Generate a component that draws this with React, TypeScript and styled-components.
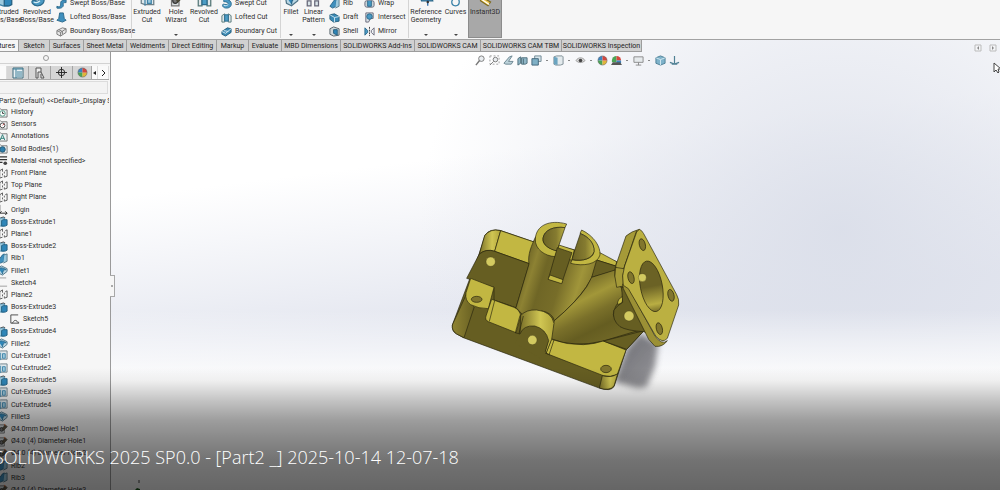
import React from "react";
import styled, { createGlobalStyle } from "styled-components";

const GlobalStyle = createGlobalStyle`
  * { box-sizing: border-box; }
  body { margin: 0; font-family: Roboto, "Open Sans", "Noto Sans", sans-serif; font-size: 7px; color: #2e2e2e; }
  button { font: inherit; color: inherit; background: none; border: 0; padding: 0; margin: 0; }
  ul { list-style: none; margin: 0; padding: 0; }
  svg { flex: none; }
`;

const Page = styled.div`
  position: relative;
  display: flex;
  flex-direction: column;
  height: 100vh;
  overflow: hidden;
`;

const Ribbon = styled.header`
  display: flex;
  align-items: flex-end;
  flex: none;
  height: 40px;
  padding-bottom: 1px;
  overflow: hidden;
  background: #f6f6f6;
  border-bottom: 1px solid #a2a2a2;
`;

const RibbonGroup = styled.div<{ $first?: boolean }>`
  display: flex;
  flex: none;
  margin-left: ${(p) => (p.$first ? "-12px" : "0")};
  border-left: 1px solid ${(p) => (p.$first ? "transparent" : "#d4d4d4")};
`;

const BigButton = styled.button<{ $w: number; $on?: boolean }>`
  display: flex;
  flex-direction: column;
  align-items: center;
  width: ${(p) => p.$w}px;
  height: 48px;
  padding-top: 2px;
  line-height: 8px;
  text-align: center;
  background: ${(p) => (p.$on ? "#a8a8a8" : "transparent")};
  border: solid ${(p) => (p.$on ? "#8c8c8c" : "transparent")};
  border-width: 0 1px 1px;
`;

const BigLabel = styled.span`
  display: block;
  height: 24px;
  padding-top: 1px;
  white-space: pre;
`;

const Caret = styled.i`
  width: 0;
  height: 0;
  margin-top: 3px;
  border: 2px solid transparent;
  border-top-color: #444;
  border-bottom: 0;
`;

const Stack = styled.div<{ $w: number }>`
  display: flex;
  flex-direction: column;
  justify-content: flex-end;
  width: ${(p) => p.$w}px;
  padding-left: 3px;
`;

const SmallButton = styled.button`
  display: flex;
  align-items: center;
  gap: 3px;
  height: 14px;
  white-space: nowrap;
`;

const Workspace = styled.div`
  display: flex;
  flex-direction: column;
  flex: 1;
  min-height: 0;
  background:
    linear-gradient(180deg, transparent 60%, rgba(255, 255, 255, 0.5) 68%, #fdfdfd 76%),
    radial-gradient(ellipse 42% 85% at 84% 42%, rgba(218, 222, 233, 0.9), rgba(226, 229, 238, 0.6) 50%, transparent),
    linear-gradient(173deg, #fff 30%, #e1e4ee 62%);
`;

const TabBar = styled.nav`
  display: flex;
  flex: none;
  height: 12px;
`;

const Tab = styled.button<{ $w: number; $on?: boolean }>`
  display: flex;
  justify-content: ${(p) => (p.$on ? "flex-end" : "center")};
  align-items: center;
  flex: none;
  width: ${(p) => p.$w}px;
  padding: 0 3px;
  color: #222;
  white-space: nowrap;
  overflow: hidden;
  background: ${(p) => (p.$on ? "#f6f6f6" : "#d1d1d1")};
  border: solid #9d9d9d;
  border-width: 0 1px 1px 0;
`;

const Body = styled.div`
  display: grid;
  grid-template-columns: 111px 1fr;
  flex: 1;
  min-height: 0;
`;

const Panel = styled.aside`
  display: flex;
  flex-direction: column;
  min-height: 0;
  background: #f6f6f6;
  border-right: 1px solid #9a9a9a;
`;

const Grip = styled.div`
  display: flex;
  justify-content: center;
  align-items: center;
  height: 12px;
  padding-right: 18px;
  border-bottom: 1px solid #d2d2d2;

  &::after {
    content: "";
    width: 4px;
    height: 4px;
    border: 1px solid #999;
    border-radius: 50%;
  }
`;

const PanelTabs = styled.div`
  display: flex;
  height: 14px;
  margin: 2px 1px 0 0;
  border-bottom: 1px solid #aaa;
`;

const PanelTab = styled.button<{ $w: number; $plain?: boolean }>`
  display: flex;
  justify-content: center;
  align-items: center;
  width: ${(p) => p.$w}px;
  overflow: hidden;
  background: ${(p) => (p.$plain ? "#fafafa" : "#d6d6d6")};
  border-right: 1px solid ${(p) => (p.$plain ? "#ddd" : "#a5a5a5")};
`;

const Filter = styled.input`
  width: 108px;
  height: 13px;
  margin-top: 1px;
  padding: 0;
  background: #f3f3f3;
  border: 1px solid #dcdcdc;
  border-left: 0;
`;

const TreeRoot = styled.div`
  height: 12px;
  margin: 1px 1px 0 -1px;
  line-height: 12px;
  white-space: nowrap;
  overflow: hidden;
`;

const Tree = styled.ul`
  display: grid;
  grid-auto-rows: minmax(12px, 1fr);
  flex: 1;
  margin-top: -1px;
  margin-bottom: -6px;
`;

const TreeItem = styled.li<{ $child?: boolean }>`
  display: flex;
  align-items: center;
  gap: 3px;
  padding-left: ${(p) => (p.$child ? "12px" : "0")};
  margin-left: -3px;
  white-space: nowrap;
`;

const Canvas = styled.main`
  position: relative;
  min-width: 0;
`;

const ViewBar = styled.div`
  display: flex;
  align-items: center;
  height: 16px;
  padding-left: 362px;
`;

const ViewButton = styled.button`
  display: flex;
  justify-content: center;
  width: 14px;
`;

const Dash = styled.span`
  display: flex;
  justify-content: center;
  width: 8px;

  &::after {
    content: "";
    width: 2px;
    height: 1px;
    background: #888;
  }
`;

const WindowButtons = styled.div`
  position: absolute;
  top: -8px;
  right: 3px;
  display: flex;
  gap: 7px;
`;

const Splitter = styled.div`
  position: absolute;
  top: 223px;
  left: -1px;
  display: flex;
  align-items: center;
  justify-content: center;
  width: 5px;
  height: 22px;
  background: #f6f6f6;
  border: 1px solid #a8a8a8;
  border-left: 0;

  &::after {
    content: "";
    width: 2px;
    height: 2px;
    background: #aaa;
  }
`;

const Pointer = styled.svg`
  position: absolute;
  top: 10px;
  right: 0;
`;

const Model = styled.svg`
  position: absolute;
  top: 158px;
  left: 37%;
`;

const Triad = styled.svg`
  position: absolute;
  left: 22px;
  bottom: 0;
`;

const Caption = styled.div`
  position: absolute;
  left: 0;
  right: 0;
  bottom: 0;
  display: flex;
  align-items: flex-end;
  height: 25%;
  padding-bottom: 20px;
  background: linear-gradient(
    180deg,
    rgba(0, 0, 0, 0) 0%,
    rgba(0, 0, 0, 0.05) 10%,
    rgba(0, 0, 0, 0.23) 27%,
    rgba(0, 0, 0, 0.38) 43%,
    rgba(0, 0, 0, 0.47) 60%,
    rgba(0, 0, 0, 0.55) 76%,
    rgba(0, 0, 0, 0.6) 100%
  );
`;

const Title = styled.h1`
  margin: 0 0 0 -6px;
  font-family: "Open Sans", "Noto Sans", sans-serif;
  font-size: 18px;
  font-weight: 300;
  line-height: 25px;
  color: #fff;
  white-space: nowrap;
`;

const B = "#3f83a8";
const L = "#9cc9dd";
const G = "#555";

const shapes: Record<string, React.ReactNode> = {
  boss: (
    <>
      <path d="M1 4l3-2h4v9H4l-3-1z" fill={L} stroke={B} />
      <path d="M5 5l2-1h4v6l-2 1H5z" fill="#2f86b8" stroke="#235f80" />
      <path d="M4 2l3-1 2 1" fill="none" stroke={G} />
    </>
  ),
  revolve: (
    <>
      <path d="M3 1c3 0 7 1 8 4s-1 6-5 6-5-3-4-4 3 1 5 0 0-3-4-3z" fill="#4b9ac4" stroke="#2c6b8e" />
      <path d="M3 8c2 1 4 0 5-1" stroke="#d6edf7" fill="none" />
    </>
  ),
  sweep: <path d="M1 9c4 2 4-1 4-3s1-4 5-4l1-1v4c-4 0-3 1-3 3s-3 4-7 3z" fill="#3f8fbd" stroke="#2a6789" />,
  loft: <path d="M4 1h4l1 6 2 2-4 2-6-2 2-2z" fill="#3f8fbd" stroke="#2a6789" />,
  boundary: (
    <>
      <path d="M1 5l6-3 4 1v4l-6 4-4-2z" fill="#e8e8e8" stroke="#777" />
      <path d="M1 5l4 2 6-4M5 7v4M3 4l4 2v3" fill="none" stroke="#777" />
    </>
  ),
  boundaryCut: (
    <>
      <path d="M1 6l6-4 4 1v4l-6 4-4-2z" fill="#3b8ab5" stroke="#245d7c" />
      <path d="M1 6l4 2 6-5M3 5l5 1" fill="none" stroke="#d9eaf2" />
    </>
  ),
  cut: (
    <>
      <path d="M1 3l3-2h7v9H4l-3-1z" fill="#dfe8ec" stroke="#6c7f88" />
      <path d="M4 3v8M6 4h3v5H6z" fill={L} stroke={B} />
    </>
  ),
  hole: (
    <>
      <path d="M2 2h6v9H2z" fill="#d8dee1" stroke="#777" />
      <circle cx="5" cy="7" r="2" fill="#777" stroke="#333" />
      <path d="M6 6l3-4 2 2-4 4z" fill="#5c5142" stroke="#443" />
      <path d="M8 1l1 2" stroke="#d66a38" />
    </>
  ),
  revCut: (
    <>
      <path d="M1 4l3-2v9H1zM11 4L8 2v9h3z" fill="#e0e7ea" stroke="#577" />
      <path d="M4 3h4v7H4z" fill="#4c9cc4" stroke="#2c6b8e" />
    </>
  ),
  fillet: (
    <>
      <path d="M1 3l4-2 6 3v3l-5 4-4-2z" fill="#b9d6e3" stroke="#4f7487" />
      <path d="M2 4c3-2 6 0 8 1-3 0-4 2-4 5" fill="#2f86b8" stroke="#2a6789" />
    </>
  ),
  pattern: (
    <>
      <path d="M1 1h3v4H1zM7 1h3v4H7zM1 7h3v4H1zM7 7h3v4H7z" fill="#d8e3e8" stroke="#667" />
      <path d="M1 1h3v4H1z" fill="#469bc6" />
    </>
  ),
  rib: (
    <>
      <path d="M1 9l5-7 2-1v8l-4 2z" fill="#3f8fbd" stroke="#2a6789" />
      <path d="M8 2l3-1v8l-4 2" fill={L} stroke="#56798a" />
    </>
  ),
  draft: (
    <>
      <path d="M1 3l5-1 5 3v5l-6 1-4-3z" fill="#3a8ab6" stroke="#29607e" />
      <path d="M1 3l5 3 5-1M6 6v5" fill="none" stroke="#cfe6f0" />
    </>
  ),
  shell: (
    <>
      <path d="M1 3l4-2 6 2v7l-6 1-4-2z" fill="#ccd6da" stroke="#546068" />
      <path d="M5 4h4v6l-4-2z" fill="#2f86b8" stroke="#245d7c" />
    </>
  ),
  wrap: (
    <>
      <rect x="1" y="3" width="10" height="7" rx="2" fill="#c9d3d8" stroke="#667" />
      <path d="M4 3v6h4V3" fill="#469bc6" stroke="#2a6789" />
    </>
  ),
  intersect: (
    <>
      <path d="M2 1h8v6H7l-2 4H2z" fill="#dbe4e8" stroke="#667" />
      <circle cx="6" cy="5" r="3" fill="#4b9ac4" stroke="#2a6789" />
    </>
  ),
  mirror: (
    <>
      <path d="M1 2l3 3v2l-3 3z" fill="#4b9ac4" stroke="#2a6789" />
      <path d="M6 1v10" stroke="#333" strokeDasharray="2 1" />
      <path d="M11 2L8 5v2l3 3z" fill="#eef3f5" stroke="#667" />
    </>
  ),
  refgeo: (
    <>
      <path d="M1 3h9l1 4H2z" fill="#4b9ac4" stroke="#2a6789" />
      <path d="M7 4v7" stroke="#26a" />
      <circle cx="7" cy="8" r="1" fill="#333" />
    </>
  ),
  curves: <path d="M4 0c-1 4 5 3 5 8 0 4-6 4-6 0 0-3 4-3 4-8" fill="none" stroke="#357fa6" />,
  instant: (
    <>
      <path d="M3 4l7 4-2 3-6-4z" fill="#f0c74d" stroke="#7d6b24" />
      <path d="M3 6l6 4" stroke="#fff" />
      <path d="M4 4l3 1" stroke="#2d7fae" strokeWidth="2" />
    </>
  ),
  history: (
    <>
      <path d="M0 2h4l1 1h6v8H0z" fill="#eef1f2" stroke="#777" />
      <circle cx="6" cy="7" r="3" fill="#fff" stroke="#4c9a84" />
      <path d="M6 5v2h2" fill="none" stroke="#333" />
    </>
  ),
  sensors: (
    <>
      <path d="M0 2h4l1 1h6v8H0z" fill="#eef1f2" stroke="#777" />
      <circle cx="6" cy="7" r="2.6" fill="#fff" stroke="#444" />
      <path d="M6 7l2-2" stroke="#c44" />
    </>
  ),
  annotations: (
    <>
      <path d="M0 2h4l1 1h6v8H0z" fill="#eef1f2" stroke="#777" />
      <path d="M3.500 10l2.500-6 2.500 6M4 8h4" fill="none" stroke="#2b7d76" />
    </>
  ),
  bodies: (
    <>
      <path d="M0 2h4l1 1h6v8H0z" fill="#eef1f2" stroke="#777" />
      <circle cx="6" cy="7" r="3" fill="#2f7fae" stroke="#23556f" />
    </>
  ),
  material: (
    <>
      <path d="M0 2h11M0 5h11M0 8h6" stroke="#333" strokeWidth="1.300" />
      <circle cx="9" cy="9" r="2" fill="#444" />
    </>
  ),
  plane: <path d="M3 3v8l3-1M3 3l3-2v3M6 6v2M9 3l2-1v7l-3 1v-2M8 6V4" fill="none" stroke="#555" />,
  origin: <path d="M3 1v9h8M9 8l2 2-2 2M3 10l2-2" fill="none" stroke="#222" />,
  sketch: <path d="M2 1h8M2 10h9" fill="none" stroke="#999" />,
  sketchChild: <path d="M10 1H2v9c4 0 2-3 5-3s1 3 4 2M3 10h8" fill="none" stroke="#444" />,
  zoomFit: (
    <>
      <circle cx="7" cy="4" r="3" fill="#e9edf0" stroke="#777" />
      <path d="M5 6l-4 5" stroke="#777" strokeWidth="1.600" />
    </>
  ),
  zoomArea: (
    <>
      <path d="M1 1h10v9H1z" fill="none" stroke="#999" strokeDasharray="2 2" />
      <circle cx="7" cy="5" r="2.500" fill="#e9edf0" stroke="#777" />
      <path d="M5 7l-4 4" stroke="#777" />
    </>
  ),
  prev: <path d="M1 9l6-7 3-1-4 6h5l-2 3H3z" fill="#bcd2da" stroke="#6b8590" />,
  section: (
    <>
      <path d="M1 4l3-2v7l-3 2zM5 3h6v6l-2 1H5z" fill="#8fb6c7" stroke="#4e6d7b" />
      <path d="M7 4v6" stroke="#4e6d7b" />
    </>
  ),
  orient: (
    <>
      <path d="M4 1h7v6H4z" fill="#d6e4ea" stroke="#6e8793" />
      <path d="M1 4h7v7H1z" fill="#7fb0c6" stroke="#426578" />
    </>
  ),
  display: (
    <>
      <path d="M1 2l3-1h6l1 1v8l-3 1H3l-2-1z" fill="#e3eaed" stroke="#7b8b93" />
      <path d="M1 2l4 1v8l-4-1z" fill="#6ba4c0" />
    </>
  ),
  eye: (
    <>
      <path d="M1 6c3-4 7-4 10 0-3 3-7 3-10 0z" fill="#ddd" stroke="#999" />
      <circle cx="6" cy="6" r="2" fill="#444" />
    </>
  ),
  ball: (
    <>
      <path d="M6 6V1a5 5 0 0 0-5 5z" fill="#3c84c0" />
      <path d="M6 6H1a5 5 0 0 0 5 5z" fill="#4ba455" />
      <path d="M6 6v5a5 5 0 0 0 5-5z" fill="#e0b53a" />
      <path d="M6 6h5a5 5 0 0 0-5-5z" fill="#d4473e" />
      <circle cx="6" cy="6" r="5" fill="none" stroke="#555" strokeOpacity=".5" />
    </>
  ),
  scene: (
    <>
      <path d="M6 6V1a5 5 0 0 0-5 5v2h5z" fill="#4ba455" />
      <path d="M6 6h5a5 5 0 0 0-5-5z" fill="#d4473e" />
      <path d="M6 6h5v3H6z" fill="#3c84c0" />
      <path d="M0 11l2-3h8l2 3z" fill="#555" />
    </>
  ),
  monitor: (
    <>
      <path d="M1 2h10v6H1z" fill="#e6eaec" stroke="#888" />
      <path d="M6 8v3M3 11h6" stroke="#888" />
    </>
  ),
  cube: (
    <>
      <path d="M6 1l5 2v6l-5 2-5-2V3z" fill="#7fb3cb" stroke="#4a7d94" />
      <path d="M1 3l5 2 5-2M6 5v6" fill="none" stroke="#d6eaf2" />
    </>
  ),
  axis: <path d="M6 1v8M1 8l5 2 5-2M3 10h6" fill="none" stroke="#4e7f93" strokeWidth="1.300" />,
  list: (
    <>
      <path d="M1 1h10v10H1z" fill="#e9f1f4" stroke="#3c6a7c" />
      <path d="M1 2h10M4 2v9M5 5h5M5 7h5M5 9h5" stroke="#3c7f98" />
    </>
  ),
  config: <path d="M2 11V1h5v4H4v6zM7 5l3 6M7 7v4h3" fill="#eee" stroke="#555" />,
  target: (
    <>
      <circle cx="6" cy="6" r="3.500" fill="none" stroke="#222" />
      <path d="M6 0v12M0 6h12" stroke="#222" />
    </>
  ),
};

function Icon({ name, size = 11 }: { name: string; size?: number }) {
  return (
    <svg width={size} height={size} viewBox="0 0 12 12" aria-hidden="true">
      {shapes[name]}
    </svg>
  );
}

function Big({ icon, label, w, caret, on }: { icon: string; label: string; w: number; caret?: boolean; on?: boolean }) {
  return (
    <BigButton $w={w} $on={on}>
      <Icon name={icon} size={15} />
      <BigLabel>{label}</BigLabel>
      {caret && <Caret />}
    </BigButton>
  );
}

function SmallStack({ w, items }: { w: number; items: [string, string][] }) {
  return (
    <Stack $w={w}>
      {items.map(([icon, label]) => (
        <SmallButton key={label}>
          <Icon name={icon} />
          {label}
        </SmallButton>
      ))}
    </Stack>
  );
}

const tabs: [string, number][] = [
  ["Sketch", 31], ["Surfaces", 34], ["Sheet Metal", 43], ["Weldments", 42], ["Direct Editing", 48],
  ["Markup", 32], ["Evaluate", 33], ["MBD Dimensions", 59], ["SOLIDWORKS Add-Ins", 74],
  ["SOLIDWORKS CAM", 66], ["SOLIDWORKS CAM TBM", 81], ["SOLIDWORKS Inspection", 80],
];

const tree: [string, string][] = [
  ["history", "History"], ["sensors", "Sensors"], ["annotations", "Annotations"], ["bodies", "Solid Bodies(1)"],
  ["material", "Material <not specified>"], ["plane", "Front Plane"], ["plane", "Top Plane"], ["plane", "Right Plane"],
  ["origin", "Origin"], ["boss", "Boss-Extrude1"], ["plane", "Plane1"], ["boss", "Boss-Extrude2"], ["rib", "Rib1"],
  ["fillet", "Fillet1"], ["sketch", "Sketch4"], ["plane", "Plane2"], ["boss", "Boss-Extrude3"],
  ["sketchChild", "Sketch5"], ["boss", "Boss-Extrude4"], ["fillet", "Fillet2"], ["cut", "Cut-Extrude1"],
  ["cut", "Cut-Extrude2"], ["boss", "Boss-Extrude5"], ["cut", "Cut-Extrude3"], ["cut", "Cut-Extrude4"],
  ["fillet", "Fillet3"], ["hole", "Ø4.0mm Dowel Hole1"], ["hole", "Ø4.0 (4) Diameter Hole1"],
  ["hole", "Ø4.0 (4) Diameter Hole2"], ["rib", "Rib2"], ["rib", "Rib3"], ["hole", "Ø4.0 (4) Diameter Hole3"],
];

const viewTools = [
  "zoomFit", "zoomArea", "prev", "section", "orient", "-", "display", "-", "eye", "-", "ball", "scene", "-",
  "monitor", "-", "cube", "axis",
];

function PipeBracket() {
  const light = "#c2b742";
  const dark = "#665e22";
  const hole = "#81762d";
  return (
    <Model width="250" height="190" viewBox="0 0 750 570" aria-label="Part2 model" role="img">
      <defs>
        <filter id="soft" x="-30%" y="-30%" width="160%" height="160%">
          <feGaussianBlur stdDeviation="10" />
        </filter>
        <linearGradient id="shade" x1="0" x2="1" y1="0" y2="1">
          <stop offset="0" stopColor="#55555a" />
          <stop offset="1" stopColor="#85858a" />
        </linearGradient>
        <linearGradient id="corner" x1="0" x2="1">
          <stop offset="0" stopColor="#7a7029" />
          <stop offset=".6" stopColor="#d0c653" />
          <stop offset="1" stopColor="#b0a43a" />
        </linearGradient>
        <linearGradient id="side" x1="0" x2="1">
          <stop offset="0" stopColor="#8f8433" />
          <stop offset=".5" stopColor="#7c722b" />
          <stop offset="1" stopColor="#686022" />
        </linearGradient>
        <linearGradient id="tube" gradientUnits="userSpaceOnUse" x1="245" y1="180" x2="455" y2="245">
          <stop offset="0" stopColor="#6e6526" />
          <stop offset=".14" stopColor="#8d8233" />
          <stop offset=".3" stopColor="#6f6626" />
          <stop offset=".55" stopColor="#776d29" />
          <stop offset=".8" stopColor="#a0953a" />
          <stop offset="1" stopColor="#857a2e" />
        </linearGradient>
        <linearGradient id="branch" gradientUnits="userSpaceOnUse" x1="430" y1="225" x2="510" y2="385">
          <stop offset="0" stopColor="#82782d" />
          <stop offset=".22" stopColor="#a29739" />
          <stop offset=".5" stopColor="#7a702a" />
          <stop offset=".75" stopColor="#655d21" />
          <stop offset="1" stopColor="#6f6626" />
        </linearGradient>
        <linearGradient id="bore" x1="0" x2="1">
          <stop offset="0" stopColor="#6b6225" />
          <stop offset=".6" stopColor="#857b30" />
          <stop offset="1" stopColor="#b9ae43" />
        </linearGradient>
        <linearGradient id="flangeBore" x1="0" y1="0" x2="0" y2="1">
          <stop offset="0" stopColor="#6b6225" />
          <stop offset=".5" stopColor="#6b6225" />
          <stop offset=".85" stopColor="#b9ae43" />
          <stop offset="1" stopColor="#7a702a" />
        </linearGradient>
      </defs>
      <path d="M600 370L655 400L645 470L620 530L595 535L520 515L560 415Z" fill="url(#shade)" opacity=".85" filter="url(#soft)" />
      <g stroke="#29250d" strokeWidth="2" strokeLinejoin="round">
        <path d="M37 345Q35 365 50 372L70 383L480 535Q510 545 522 530L558 420L612 362L530 155L480 140L460 200L280 160L285 97L180 61Q150 55 135 75L118 130Z" fill={dark} />
        <path d="M118 132L134 77Q150 55 182 62L164 124Q138 115 118 132Z" fill="url(#corner)" />
        <path d="M182 62L285 97L268 161L164 124Z" fill={light} />
        <path d="M118 132Q140 115 164 124L268 161L228 293L162 270V232L80 205Z" fill={dark} />
        <path d="M37 345L78 255Q85 282 103 290L72 383L50 372Q35 362 37 345Z" fill="url(#side)" />
        <path d="M92 205L162 232L145 296Q115 296 92 284Q74 272 78 248Z" fill={light} />
        <path d="M155 268L222 292Q240 300 242 318L228 368L145 335Q134 330 138 318Z" fill={light} />
        <path d="M164 272L148 334" fill="none" />
        <path d="M287 80C275 105 262 135 267 162L228 293L248 314Q285 294 318 306Q340 316 343 332Q405 280 438 232Q470 185 480 130L405 120L352 107Z" fill="url(#tube)" />
        <path d="M476 126L530 155L527 168L470 150Z" fill={light} />
        <path d="M470 150L527 168L524 182L455 202Z" fill={dark} />
        <path d="M455 202L525 180Q520 210 545 235L550 258Q520 290 520 315Q530 350 570 357L600 360L490 393Q400 415 330 385L343 332Q410 275 440 230Z" fill="url(#branch)" />
        <path d="M380 42C330 28 288 45 286 87C284 118 315 138 345 140L352 123C325 116 307 103 309 85C312 60 342 48 375 53Z" fill={light} />
        <path d="M375 53C342 48 312 60 309 85C307 105 328 118 352 123L357 105Z" fill="url(#bore)" />
        <path d="M357 105L403 120L395 152L352 123Z" fill={light} />
        <path d="M425 60C462 78 482 110 480 135C472 163 430 170 392 160L396 149C430 155 460 145 462 125C464 100 445 80 420 70Z" fill={light} />
        <path d="M421 71C445 80 464 100 462 125C456 145 430 155 396 149L405 118Z" fill="url(#bore)" />
        <path d="M352 113L396 128L365 220L325 207Z" fill={dark} />
        <path d="M330 195L369 209L365 221L324 208Z" fill={light} />
        <path d="M334 388Q380 405 430 404Q465 402 490 393L558 420L532 493Q510 503 490 497L318 430Z" fill={light} />
        <path d="M487 497Q515 505 533 491L522 528Q508 544 478 534Z" fill="url(#corner)" />
        <path d="M242 316Q260 298 290 300Q335 305 342 340L335 388L318 430L240 372Z" fill="url(#corner)" />
        <path d="M240 372Q250 345 284 348Q318 356 326 392L316 430L300 445L225 400Z" fill={dark} stroke="none" />
        <path d="M225 368L240 372Q250 345 284 348Q318 356 326 392L316 424Q317 431 330 435" fill="none" />
        <path d="M240 316L226 368M250 318L237 370M342 390L328 432" fill="none" />
        <path d="M490 393L612 362L560 418Z" fill={dark} />
        <path d="M550 258Q530 268 533 284L546 278Z" fill={light} />
        <path d="M545 232L565 232L640 380L612 365Q560 362 540 350Q515 330 522 300Q532 286 548 277Z" fill={dark} />
        <path d="M558 78Q574 64 598 58L554 168Q545 195 550 228L530 232Q520 198 528 165Z" fill="#a59a38" />
        <path d="M526 172L551 176M590 62L551 176" fill="none" />
        <path d="M548 222L565 232L645 378Q665 406 682 392Q668 412 645 409L626 388L550 236Z" fill="#9b9035" />
        <path d="M598 58Q605 60 611 71L710 254Q718 268 716 285L682 385Q668 402 647 378L565 236L550 226Q544 198 554 168L590 66Z" fill="#bbb041" />
        <ellipse cx="634" cy="229" rx="33" ry="77" transform="rotate(-11 634 229)" fill="url(#flangeBore)" />
        {[[607, 104], [573, 203], [693, 256], [658, 356]].map(([x, y]) => (
          <ellipse key={x} cx={x} cy={y} rx="9" ry="18" transform={`rotate(-14 ${x} ${y})`} fill={hole} />
        ))}
        <ellipse cx="110" cy="268" rx="16" ry="9" fill={hole} />
        <ellipse cx="498" cy="477" rx="16" ry="11" fill={hole} />
      </g>
      <g fill="#d3ca60" stroke="#3a3516">
        <circle cx="152" cy="155" r="14" />
        <circle cx="277" cy="390" r="14" />
        <circle cx="567" cy="318" r="15" />
        <circle cx="607" cy="203" r="12" />
      </g>
    </Model>
  );
}

export default function App() {
  return (
    <>
      <GlobalStyle />
      <Page>
        <Ribbon>
          <RibbonGroup $first>
            <Big icon="boss" label={"Extruded\nBoss/Base"} w={32} />
            <Big icon="revolve" label={"Revolved\nBoss/Base"} w={32} />
            <SmallStack w={78} items={[["sweep", "Swept Boss/Base"], ["loft", "Lofted Boss/Base"], ["boundary", "Boundary Boss/Base"]]} />
          </RibbonGroup>
          <RibbonGroup>
            <Big icon="cut" label={"Extruded\nCut"} w={30} />
            <Big icon="hole" label={"Hole\nWizard"} w={28} caret />
            <Big icon="revCut" label={"Revolved\nCut"} w={28} />
            <SmallStack w={62} items={[["revolve", "Swept Cut"], ["revCut", "Lofted Cut"], ["boundaryCut", "Boundary Cut"]]} />
          </RibbonGroup>
          <RibbonGroup>
            <Big icon="fillet" label={"Fillet\n "} w={20} caret />
            <Big icon="pattern" label={"Linear\nPattern"} w={25} caret />
            <SmallStack w={35} items={[["rib", "Rib"], ["draft", "Draft"], ["shell", "Shell"]]} />
            <SmallStack w={47} items={[["wrap", "Wrap"], ["intersect", "Intersect"], ["mirror", "Mirror"]]} />
          </RibbonGroup>
          <RibbonGroup>
            <Big icon="refgeo" label={"Reference\nGeometry"} w={34} caret />
            <Big icon="curves" label={"Curves\n "} w={25} caret />
            <Big icon="instant" label="Instant3D" w={34} on />
          </RibbonGroup>
        </Ribbon>
        <Workspace>
          <TabBar>
            <Tab $w={19} $on>Features</Tab>
            {tabs.map(([label, w]) => (
              <Tab key={label} $w={w}>{label}</Tab>
            ))}
          </TabBar>
          <Body>
            <Panel>
              <Grip />
              <PanelTabs>
                <PanelTab $w={7} $plain aria-label="Feature tree" />
                <PanelTab $w={22} aria-label="Properties"><Icon name="list" size={12} /></PanelTab>
                <PanelTab $w={22} aria-label="Configurations"><Icon name="config" size={12} /></PanelTab>
                <PanelTab $w={22} aria-label="Dimensions"><Icon name="target" /></PanelTab>
                <PanelTab $w={19} aria-label="Appearances"><Icon name="ball" /></PanelTab>
                <PanelTab $w={6} $plain aria-label="Previous">
                  <svg width="3" height="4" viewBox="0 0 3 4"><path d="M3 0v4L0 2z" fill="#222" /></svg>
                </PanelTab>
                <PanelTab $w={11} $plain aria-label="Next">
                  <svg width="5" height="8" viewBox="0 0 5 8"><path d="M1 1l3 3-3 3" fill="none" stroke="#222" /></svg>
                </PanelTab>
              </PanelTabs>
              <Filter aria-label="Filter" />
              <TreeRoot>Part2 (Default) &lt;&lt;Default&gt;_Display State 1&gt;</TreeRoot>
              <Tree>
                {tree.map(([icon, label]) => (
                  <TreeItem key={label} $child={icon === "sketchChild"}>
                    <Icon name={icon} />
                    {label}
                  </TreeItem>
                ))}
              </Tree>
            </Panel>
            <Canvas>
              <ViewBar>
                {viewTools.map((t, i) =>
                  t === "-" ? <Dash key={i} /> : <ViewButton key={i} aria-label={t}><Icon name={t} /></ViewButton>
                )}
              </ViewBar>
              <WindowButtons>
                {["M5 2L3 4l2 2z", "M3 2l2 2-2 2z"].map((d) => (
                  <svg key={d} width="8" height="8" viewBox="0 0 8 8">
                    <path d="M1 1h6v6H1z" fill="#f4f5f8" stroke="#bbb" />
                    <path d={d} fill="#888" />
                  </svg>
                ))}
              </WindowButtons>
              <Splitter />
              <PipeBracket />
              <Triad width="10" height="14" viewBox="0 0 10 14">
                <path d="M6 4v3" stroke="#444" />
                <path d="M2 14l2-2 3 1v1z" fill="#1e5a1e" />
              </Triad>
              <Pointer width="7" height="12" viewBox="0 0 7 12">
                <path d="M1 1v9l2-2 2 3 1-1-1-3h3z" fill="#fff" stroke="#444" />
              </Pointer>
            </Canvas>
          </Body>
        </Workspace>
        <Caption>
          <Title>SOLIDWORKS 2025 SP0.0 - [Part2 _] 2025-10-14 12-07-18</Title>
        </Caption>
      </Page>
    </>
  );
}
